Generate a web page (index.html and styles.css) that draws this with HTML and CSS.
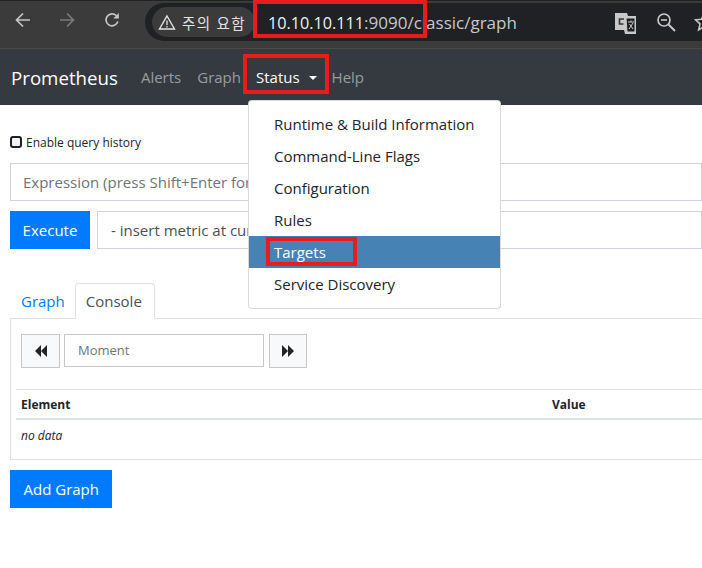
FILE: index.html
```html
<!DOCTYPE html>
<html lang="en">
<head>
<meta charset="utf-8">
<title>Prometheus Time Series Collection and Processing Server</title>
<link rel="stylesheet" href="styles.css">
</head>
<body>
<header class="chrome">
  <svg class="cicon" width="20" height="20" viewBox="0 0 20 20"><path d="M17 10H4M10 3.500 3.500 10l6.500 6.500" fill="none" stroke="#c6c6c6" stroke-width="1.700"/></svg>
  <svg class="cicon dim" width="20" height="20" viewBox="0 0 20 20"><path d="M3 10h13M10 3.500l6.500 6.500-6.500 6.500" fill="none" stroke="#7b7b7b" stroke-width="1.700"/></svg>
  <svg class="cicon" width="20" height="20" viewBox="0 0 20 20"><path d="M15.800 11.500A6 6 0 1 1 14.200 5.500L16 7.500" fill="none" stroke="#c6c6c6" stroke-width="1.700"/><path d="M16.800 3v5.500h-5.500z" fill="#c6c6c6"/></svg>
  <div class="omnibox">
    <div class="chip">
      <svg width="18" height="17" viewBox="0 0 18 17"><path d="M9 2 16.500 15h-15z" fill="none" stroke="#e3e3e3" stroke-width="1.400"/><path d="M9 6.500v4.500M9 12v1.500" stroke="#e3e3e3" stroke-width="1.300"/></svg>
      <span class="chip-text">주의 요함</span>
    </div>
    <div class="url"><span class="host">10.10.10.111</span>:9090/classic/graph</div>
    <div class="omni-icons">
      <svg width="24" height="24" viewBox="0 0 24 24"><path d="M1 3h12l1 3h8v18H11l-1-4H1z" fill="#c8c8c8"/><path d="M12 8h9v14h-8z" fill="#202124" stroke="#c8c8c8"/><path d="M10 9H5.500v5H9.500" fill="none" stroke="#333" stroke-width="1.600"/><path d="M14 12h6M17 10.500V12M15 19l4-6M15.500 14l3.500 5" fill="none" stroke="#c8c8c8"/></svg>
      <svg width="22" height="22" viewBox="0 0 22 22"><circle cx="9" cy="9" r="6" fill="none" stroke="#c8c8c8" stroke-width="1.700"/><path d="M13.500 13.500 20 20" stroke="#c8c8c8" stroke-width="1.900"/><path d="M6 9h6" stroke="#c8c8c8" stroke-width="1.600"/></svg>
      <svg width="20" height="20" viewBox="0 0 20 20"><path d="M10 1.500l2.500 5.700 6 .6-4.500 4 1.300 6L10 14.700l-5.300 3.100 1.300-6-4.500-4 6-.6z" fill="none" stroke="#c8c8c8" stroke-width="1.600"/></svg>
    </div>
  </div>
</header>

<nav class="navbar">
  <a class="brand">Prometheus</a>
  <a class="nav-link">Alerts</a>
  <a class="nav-link">Graph</a>
  <div class="status-wrap">
    <a class="nav-link active">Status<span class="caret"></span></a>
    <ul class="menu">
      <li>Runtime &amp; Build Information</li>
      <li>Command-Line Flags</li>
      <li>Configuration</li>
      <li>Rules</li>
      <li class="selected"><span class="mark mark-targets">Targets</span></li>
      <li>Service Discovery</li>
    </ul>
    <span class="mark mark-status"></span>
  </div>
  <a class="nav-link">Help</a>
</nav>
<span class="mark mark-url"></span>

<main class="page">
  <label class="history"><span class="checkbox"></span>Enable query history</label>
  <div class="expr">Expression (press Shift+Enter for newlines)</div>
  <div class="actions">
    <button class="btn">Execute</button>
    <div class="select">- insert metric at cursor -</div>
  </div>
  <div class="tabs">
    <a class="tab">Graph</a>
    <a class="tab current">Console</a>
  </div>
  <section class="panel">
    <div class="moment-row">
      <button class="step">
        <svg width="14" height="12" viewBox="0 0 14 12"><path d="M7 0v12L1 6zM13 0v12L7 6z" fill="#212529"/></svg>
      </button>
      <div class="moment">Moment</div>
      <button class="step">
        <svg width="14" height="12" viewBox="0 0 14 12"><path d="M1 0v12l6-6zM7 0v12l6-6z" fill="#212529"/></svg>
      </button>
    </div>
    <div class="table">
      <div class="thead"><span class="col-el">Element</span><span>Value</span></div>
      <div class="tbody"><em>no data</em></div>
    </div>
  </section>
  <button class="btn add">Add Graph</button>
</main>
</body>
</html>
```
FILE: styles.css
```css
* { box-sizing: border-box; }
html, body { margin: 0; height: 568px; overflow: hidden; }
body {
  position: relative;
  background: #fff;
  color: #212529;
  font-family: "Open Sans", "Noto Sans", "Noto Sans CJK KR", sans-serif;
  font-size: 15px;
}

/* browser chrome */
.chrome {
  height: 49px;
  padding: 2px 0 8px 13px;
  display: flex;
  align-items: flex-start;
  background: #3b3b3b;
  border-top: 1px solid #222;
  border-bottom: 1px solid #4a4a4a;
  overflow: hidden;
}
.cicon { margin: 7px 24px 0 0; flex: none; }
.cicon.dim { margin-right: 25px; }
.omnibox {
  margin-left: -1px;
  width: 560px;
  height: 38px;
  flex: none;
  display: flex;
  align-items: center;
  padding-left: 7px;
  background: #202124;
  border-radius: 19px 0 0 19px;
}
.chip {
  width: 103px;
  height: 30px;
  flex: none;
  display: flex;
  align-items: center;
  gap: 6px;
  padding-left: 6px;
  background: #3b3b3b;
  border-radius: 15px;
}
.chip-text {
  color: #e3e3e3;
  font-family: "Noto Sans CJK KR", sans-serif;
  font-size: 14.500px;
  letter-spacing: 1.500px;
  white-space: nowrap;
}
.url {
  margin-left: 13px;
  width: 346px;
  flex: none;
  color: #c8c8c8;
  font-size: 17px;
  white-space: nowrap;
}
.host { color: #f1f1f1; font-size: 16.200px; }
.omni-icons { display: flex; align-items: center; gap: 17px; flex: none; }

/* navbar */
.navbar {
  height: 56px;
  display: flex;
  align-items: center;
  padding-left: 11px;
  background: #343a40;
}
.brand { color: #fff; font-size: 18.700px; margin-right: 23px; }
.nav-link { color: rgba(255,255,255,.5); font-size: 15px; margin-right: 16px; white-space: nowrap; }
.nav-link.active { color: #fff; margin-right: 0; }
.status-wrap { position: relative; margin: 0 15px 0 -1px; }
.caret {
  display: inline-block;
  margin-left: 9px;
  vertical-align: 3px;
  border-top: 4px solid #fff;
  border-left: 4px solid transparent;
  border-right: 4px solid transparent;
}
.menu {
  position: absolute;
  top: 33px;
  left: -8px;
  width: 253px;
  height: 209px;
  margin: 0;
  padding: 7px 0;
  list-style: none;
  background: #fff;
  border: 1px solid rgba(0,0,0,.15);
  border-radius: 4px;
  z-index: 5;
}
.menu li {
  height: 32px;
  line-height: 32px;
  padding-left: 25px;
  color: #212529;
  font-size: 15px;
  white-space: nowrap;
}
.menu li.selected { background: #4682b4; color: #fff; }

/* red annotations */
.mark { border: 4px solid #e81c1c; z-index: 6; }
.mark-url { position: absolute; left: 253px; top: 0; width: 174px; height: 38px; }
.mark-status { position: absolute; left: -13px; top: -13px; width: 86px; height: 40px; }
.mark-targets {
  position: absolute;
  left: 17px;
  top: 136px;
  width: 91px;
  height: 29px;
  line-height: 23px;
  padding-left: 4px;
  margin: 0;
}

/* page */
.page { padding: 30px 0 0 10px; }
.history { display: flex; align-items: center; height: 14px; font-size: 12px; }
.checkbox {
  width: 12px;
  height: 12px;
  margin-right: 4px;
  border: 2px solid #1c1f23;
  border-radius: 3px;
  background: #eef1f6;
}
.expr {
  height: 38px;
  margin-top: 14px;
  padding-left: 12px;
  line-height: 36px;
  color: #6c757d;
  background: #fff;
  border: 1px solid #ced4da;
  font-size: 15px;
  white-space: nowrap;
}
.actions { display: flex; margin-top: 10px; gap: 7px; }
.btn {
  height: 38px;
  padding: 0 13.500px;
  color: #fff;
  background: #007bff;
  border: 0;
  font: inherit;
}
.select {
  flex: 1;
  height: 38px;
  padding-left: 13px;
  line-height: 36px;
  color: #495057;
  border: 1px solid #ced4da;
  white-space: nowrap;
}
.actions .btn { width: 80px; padding: 0; }
.tabs { display: flex; margin-top: 34px; height: 35px; }
.tab { padding: 0 9px 0 10px; line-height: 34px; color: #007bff; border: 1px solid transparent; }
.tab.current {
  width: 80px;
  padding-left: 10px;
  color: #495057;
  background: #fff;
  border-color: #dee2e6 #dee2e6 #fff;
  border-radius: 4px 4px 0 0;
  height: 36px;
  position: relative;
  z-index: 1;
}
.panel { height: 142px; padding: 15px 0 0 5px; border: 1px solid #dee2e6; border-right: 0; }
.moment-row { display: flex; margin-left: 5px; gap: 4px; }
.step {
  width: 39px;
  height: 34px;
  padding: 0;
  display: flex;
  align-items: center;
  justify-content: center;
  background: #f8f9fa;
  border: 1px solid #c8c8c8;
}
.step:last-child { width: 38px; margin-left: 1px; }
.moment {
  width: 200px;
  height: 33px;
  padding-left: 13px;
  line-height: 30px;
  color: #6c757d;
  border: 1px solid #c8c8c8;
  font-size: 13px;
}
.table { margin-top: 21px; font-size: 12px; }
.thead {
  display: flex;
  height: 31px;
  line-height: 30px;
  padding-left: 5px;
  font-weight: 700;
  border-top: 1px solid #dee2e6;
  border-bottom: 2px solid #dee2e6;
}
.col-el { width: 531px; }
.tbody { padding-left: 5px; line-height: 31px; }
.add { margin-top: 10px; display: block; }
```
